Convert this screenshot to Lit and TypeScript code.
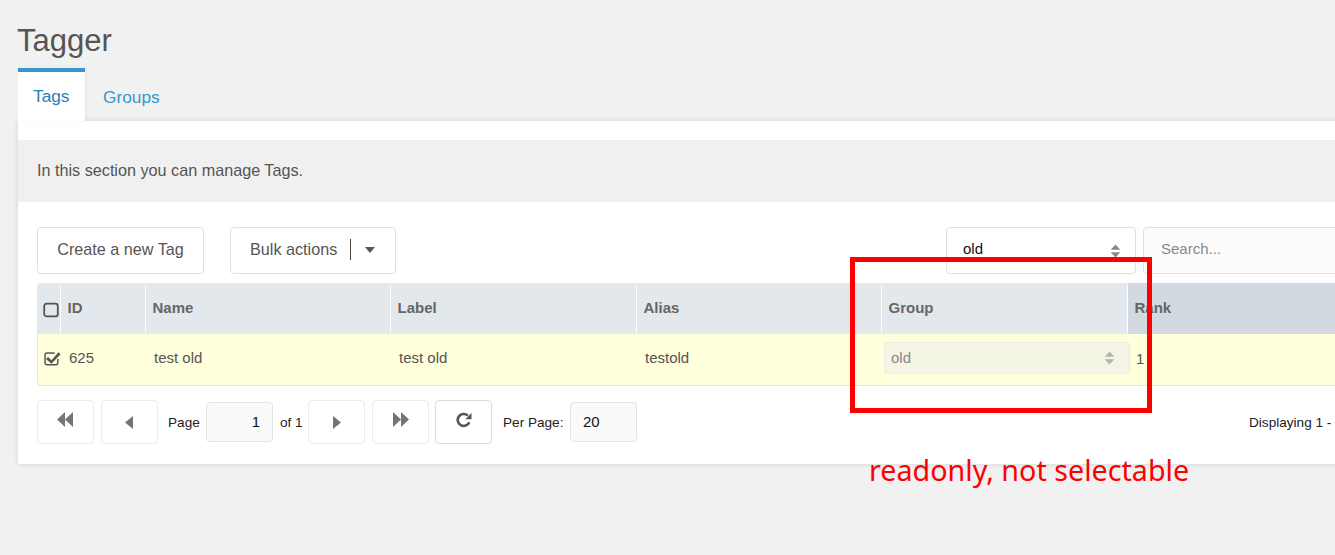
import { LitElement, html, css } from "lit";
import { customElement } from "lit/decorators.js";

const updown = html`<svg class="updown" width="11" height="14" viewBox="0 0 12 16"><path d="M6 0.5 11.5 6.5H.5z M.5 9.5H11.5L6 15.5z" fill="currentColor"/></svg>`;
const first = html`<svg width="16" height="15" viewBox="0 0 16 15"><path d="M8 0V15L0 7.5zM16 0V15L8 7.5z" fill="#757575"/></svg>`;
const prev = html`<svg width="8" height="13" viewBox="0 0 8 13"><path d="M8 0V13L0 6.5z" fill="#757575"/></svg>`;
const next = html`<svg width="8" height="13" viewBox="0 0 8 13"><path d="M0 0V13L8 6.5z" fill="#757575"/></svg>`;
const last = html`<svg width="16" height="15" viewBox="0 0 16 15"><path d="M0 0V15L8 7.5zM8 0V15L16 7.5z" fill="#757575"/></svg>`;
const refresh = html`<svg width="16" height="16" viewBox="0 0 16 16"><path d="M13.3 10.2A6 6 0 1 1 11.9 3.6" fill="none" stroke="#555" stroke-width="2.6"/><path d="M15.5 1V7.2H9.3z" fill="#555"/></svg>`;

@customElement("app-root")
export class AppRoot extends LitElement {
  static styles = css`
    :host { display: block; width: 1335px; height: 555px; overflow: hidden; position: relative; background: #f1f1f1; font-family: "Liberation Sans", Arial, sans-serif; color: #555; font-size: 16px; }
    h1 { margin: 0; font-size: 31px; font-weight: 400; line-height: 36px; padding: 23px 0 0 17px; height: 45px; color: #555; }
    .tabs { display: flex; margin-left: 18px; height: 53px; position: relative; z-index: 1; }
    .tab { box-sizing: border-box; height: 53px; font-size: 17.3px; }
    .tab.active { width: 67px; background: #fff; border-top: 4px solid #3498cc; padding-left: 15px; color: #2980b9; line-height: 48px; box-shadow: 1px 0 2px rgba(0,0,0,.06); }
    .tab.plain { padding-left: 18px; color: #3498cc; line-height: 58px; }
    .panel { margin-left: 18px; width: 1400px; height: 343px; background: #fff; box-shadow: 0 0 6px rgba(0,0,0,.12); padding-top: 19px; box-sizing: border-box; }
    .notice { height: 62px; background: #f0f0f0; padding-left: 19px; line-height: 60px; font-size: 16.2px; }
    .toolbar { display: flex; align-items: flex-start; margin: 25px 0 0 19px; height: 56px; }
    .btn { box-sizing: border-box; flex: none; height: 47px; border: 1px solid #e0e0e0; border-radius: 4px; background: #fff; display: flex; align-items: center; font-size: 16.2px; color: #555; padding-bottom: 2px; }
    .create { width: 167px; justify-content: center; }
    .bulk { width: 166px; margin-left: 26px; padding-left: 19px; }
    .bulk .sep { width: 1px; height: 21px; background: #444; margin: 0 14px 0 13px; }
    .caret { width: 0; height: 0; border: 5.5px solid transparent; border-top: 6px solid #555; border-bottom: 0; margin-top: 1px; }
    .sel { width: 190px; margin-left: 550px; padding: 0 14px 4px 16px; justify-content: space-between; color: #111; font-size: 15px; }
    .sel .updown { color: #888; margin-top: 4px; }
    .search { width: 300px; margin-left: 7px; padding: 0 0 4px 17px; background: #fbfbfb; color: #888; font-size: 15px; }
    .table { margin-left: 19px; }
    .grid { display: grid; grid-template-columns: 24px 85px 245px 246px 245px 246px 300px; }
    .head { height: 51px; background: #e3e8ed; border-radius: 4px 4px 0 0; }
    .th { box-sizing: border-box; height: 48px; margin-top: 2px; padding-left: 6.5px; border-right: 1px solid #fff; font-weight: 700; font-size: 15px; line-height: 46px; color: #666; }
    .th.check { padding-left: 6px; display: flex; align-items: center; padding-top: 2px; }
    .th.rank { background: #d2d9e1; border-right: 0; margin-top: 0; height: 51px; line-height: 50px; }
    .row { height: 52px; box-sizing: border-box; background: #ffffdc; border-bottom: 1px solid #e4e4e4; border-left: 1px solid #e6e6e6; border-radius: 0 0 0 4px; align-items: center; font-size: 15px; color: #555; padding-bottom: 4px; }
    .td { padding-left: 7px; line-height: 48px; }
    .td.c0 { padding-left: 6px; display: flex; align-items: center; }
    .ro { box-sizing: border-box; width: 246px; height: 32px; margin-left: 1px; background: #f5f5e6; border: 1px solid #ecece0; border-radius: 3px; display: flex; align-items: center; justify-content: space-between; padding: 0 14px 0 6px; color: #888; }
    .ro span { margin-top: -2px; }
    .ro .updown { color: #b5b5a8; }
    .rk { padding-left: 7px; }
    .pager { display: flex; align-items: center; margin: 14px 0 0 19px; height: 44px; font-size: 13.6px; color: #222; }
    .pg { box-sizing: border-box; flex: none; width: 57px; height: 44px; border: 1px solid #ececec; border-radius: 4px; background: #fff; display: flex; align-items: center; justify-content: center; }
    .pg.up svg { margin-top: -5px; }
    .pg.first svg { margin-left: -2px; }
    .pg.prev svg { margin-left: -2px; }
    .pg.dark { border-color: #ddd; }
    .field { box-sizing: border-box; flex: none; width: 67px; height: 40px; border: 1px solid #e2e2e2; border-radius: 4px; background: #fafafa; font-size: 15px; color: #111; display: flex; align-items: center; padding-bottom: 2px; }
    .field.r { justify-content: flex-end; padding-right: 12px; }
    .field.l { padding-left: 12px; }
    .lbl { flex: none; white-space: nowrap; }
    .disp { flex: none; margin-left: 612px; white-space: nowrap; }
    .mark { position: absolute; left: 850px; top: 257px; width: 302px; height: 156px; box-sizing: border-box; border: 5px solid #f00; }
    .note { position: absolute; left: 869px; top: 451px; font-family: "Noto Sans", sans-serif; font-size: 28.7px; line-height: 38px; color: #f00; white-space: nowrap; }
  `;

  render() {
    return html`
      <h1>Tagger</h1>
      <div class="tabs">
        <div class="tab active">Tags</div>
        <div class="tab plain">Groups</div>
      </div>
      <div class="panel">
        <div class="notice">In this section you can manage Tags.</div>
        <div class="toolbar">
          <div class="btn create">Create a new Tag</div>
          <div class="btn bulk">Bulk actions<span class="sep"></span><span class="caret"></span></div>
          <div class="btn sel">old ${updown}</div>
          <div class="btn search">Search...</div>
        </div>
        <div class="table">
          <div class="grid head">
            <div class="th check"><svg width="16" height="16" viewBox="0 0 16 16"><rect x="1.2" y="1.6" width="13.6" height="12.8" rx="2.5" fill="none" stroke="#555" stroke-width="1.8"/></svg></div>
            <div class="th">ID</div>
            <div class="th">Name</div>
            <div class="th">Label</div>
            <div class="th">Alias</div>
            <div class="th">Group</div>
            <div class="th rank">Rank</div>
          </div>
          <div class="grid row">
            <div class="td c0"><svg width="17" height="16" viewBox="0 0 16 15"><path d="M13 8.5V12a1.8 1.8 0 0 1-1.8 1.8H2.8A1.8 1.8 0 0 1 1 12V4.5a1.8 1.8 0 0 1 1.8-1.8H10" fill="none" stroke="#555" stroke-width="1.4"/><path d="M3.8 6.5 7 9.6 13.6 2.2 15.6 4 7 13 1.9 8.4z" fill="#555"/></svg></div>
            <div class="td">625</div>
            <div class="td">test old</div>
            <div class="td">test old</div>
            <div class="td">testold</div>
            <div class="ro"><span>old</span>${updown}</div>
            <div class="rk">1</div>
          </div>
        </div>
        <div class="pager">
          <div class="pg up first">${first}</div>
          <div class="pg prev" style="margin-left:7px">${prev}</div>
          <span class="lbl" style="margin-left:10px;width:38px">Page</span>
          <div class="field r">1</div>
          <span class="lbl" style="margin-left:7px;width:28px">of 1</span>
          <div class="pg">${next}</div>
          <div class="pg up" style="margin-left:7px">${last}</div>
          <div class="pg up dark" style="margin-left:6px">${refresh}</div>
          <span class="lbl" style="margin-left:11px;width:67px">Per Page:</span>
          <div class="field l">20</div>
          <span class="disp">Displaying 1 - 1 of 1</span>
        </div>
      </div>
      <div class="mark"></div>
      <div class="note">readonly, not selectable</div>
    `;
  }
}
